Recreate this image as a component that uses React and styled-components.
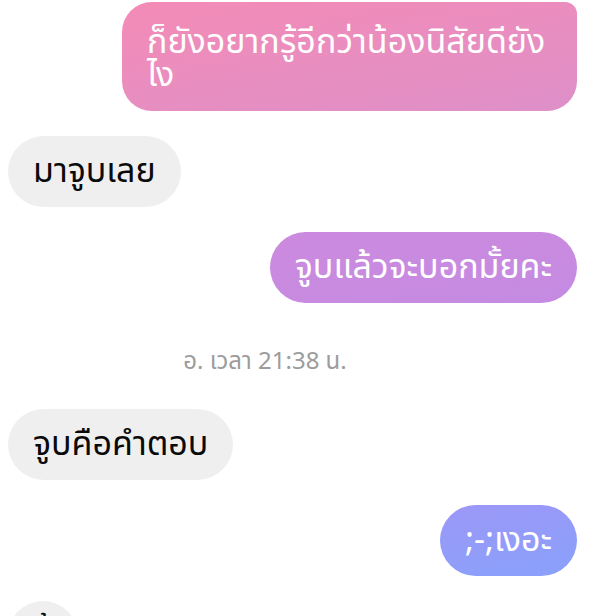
import styled, { createGlobalStyle } from 'styled-components';

const GlobalStyle = createGlobalStyle`
    html, body {
        margin: 0;
        padding: 0;
        background: #ffffff;
    }
    body {
        font-family: "Noto Sans Thai", "Noto Sans", "DejaVu Sans", sans-serif;
        -webkit-font-smoothing: antialiased;
    }
`;

const Screen = styled.div`
    width: 605px;
    height: 616px;
    overflow: hidden;
    display: flex;
    flex-direction: column;
    gap: 25px;
    padding: 2px 28px 0 8px;
    box-sizing: border-box;
`;

const Row = styled.div`
    display: flex;
    justify-content: ${({ $mine }) => ($mine ? 'flex-end' : 'flex-start')};
`;

const Bubble = styled.div`
    max-width: 405px;
    padding: 19px 25px;
    font-size: 34px;
    line-height: 33px;
    border-radius: 36px;
    color: ${({ $mine }) => ($mine ? '#ffffff' : '#0a0a0a')};
    background: ${({ $bg }) => $bg || '#efefef'};
    ${({ $tall }) =>
        $tall &&
        `
        padding: 24px 25px 19px;
        border-radius: 30px 12px 30px 30px;
    `}
`;

const Stamp = styled.div`
    padding: 19px 55px 7px 0;
    text-align: center;
    font-size: 24px;
    line-height: 30px;
    color: #9c9c9c;
`;

const messages = [
    {
        mine: true,
        tall: true,
        text: 'ก็ยังอยากรู้อีกว่าน้องนิสัยดียังไง',
        bg: 'linear-gradient(170deg, #f48bb6 0%, #de90c9 100%)'
    },
    { text: 'มาจูบเลย' },
    {
        mine: true,
        text: 'จูบแล้วจะบอกมั้ยคะ',
        bg: 'linear-gradient(170deg, #cc8ade 0%, #c48be2 100%)'
    },
    { stamp: 'อ. เวลา 21:38 น.' },
    { text: 'จูบคือคำตอบ' },
    {
        mine: true,
        text: ';-;เงอะ',
        bg: 'linear-gradient(170deg, #9c97f7 0%, #89a1fb 100%)'
    },
    { text: 'อื้' }
];

export default function App() {
    return (
        <>
            <GlobalStyle />
            <Screen>
                {messages.map((m, i) =>
                    m.stamp ? (
                        <Stamp key={i}>{m.stamp}</Stamp>
                    ) : (
                        <Row key={i} $mine={m.mine}>
                            <Bubble $mine={m.mine} $bg={m.bg} $tall={m.tall}>
                                {m.text}
                            </Bubble>
                        </Row>
                    )
                )}
            </Screen>
        </>
    );
}
